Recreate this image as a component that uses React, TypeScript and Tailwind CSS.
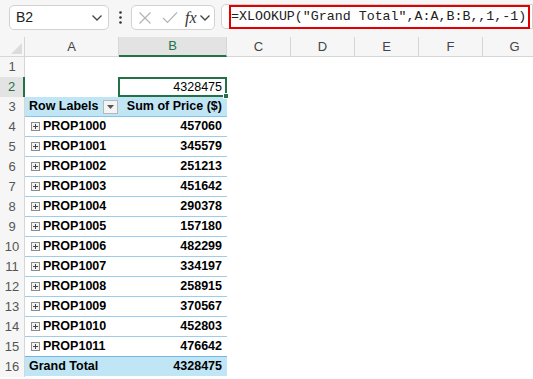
import React from "react";

const rows: [string, string][] = [
    ["PROP1000", "457060"],
    ["PROP1001", "345579"],
    ["PROP1002", "251213"],
    ["PROP1003", "451642"],
    ["PROP1004", "290378"],
    ["PROP1005", "157180"],
    ["PROP1006", "482299"],
    ["PROP1007", "334197"],
    ["PROP1008", "258915"],
    ["PROP1009", "370567"],
    ["PROP1010", "452803"],
    ["PROP1011", "476642"],
];

const cols = ["C", "D", "E", "F", "G"];

function Chevron() {
    return (
        <svg width="12" height="8" viewBox="0 0 12 8" fill="none" stroke="#444" strokeWidth="1.3">
            <path d="M1.5 1.5 L6 6 L10.5 1.5"/>
        </svg>
    );
}

function RowNum(props: { n: number, active?: boolean }) {
    return (
        <div
            className={"h-5 flex items-center justify-center text-[13px] " +
                (props.active ? "text-[#217346] bg-[#e3e3e3] border-r-2 border-[#217346]" : "text-[#555] bg-[#f6f6f6] border-r border-[#d6d6d6]")}>
            {props.n}
        </div>
    );
}

function EmptyCells() {
    return <>{cols.map(c => <div key={c} className="h-5"/>)}</>;
}

function Plus() {
    return (
        <span className="w-[9px] h-[9px] border border-[#8a8a8a] bg-[#f2f2f2] flex items-center justify-center mr-[3px] shrink-0">
            <svg width="7" height="7" viewBox="0 0 7 7" stroke="#444" strokeWidth="1">
                <path d="M3.5 1 V6 M1 3.5 H6"/>
            </svg>
        </span>
    );
}

export default function App() {
    return (
        <div className="w-[533px] h-[379px] overflow-hidden bg-white font-['Liberation_Sans',sans-serif] text-black">
            {/* formula bar */}
            <div className="h-[37px] bg-[#f6f6f6] flex items-start pt-[5px]">
                <div className="ml-[9px] w-[100px] h-[25px] bg-white border border-[#d2d2d2] rounded-[5px] flex items-center justify-between pl-[6px] pr-[5px]">
                    <span className="text-[14px] text-[#222]">B2</span>
                    <Chevron/>
                </div>
                <div className="w-[22px] h-[25px] flex items-center justify-center">
                    <svg width="3" height="13" viewBox="0 0 3 13" fill="#333">
                        <circle cx="1.5" cy="1.5" r="1.3"/>
                        <circle cx="1.5" cy="6.5" r="1.3"/>
                        <circle cx="1.5" cy="11.5" r="1.3"/>
                    </svg>
                </div>
                <div className="w-[84px] h-[25px] bg-white border border-[#d2d2d2] rounded-[5px] flex items-center pl-[6px]">
                    <svg width="14" height="14" viewBox="0 0 14 14" stroke="#b4b4b4" strokeWidth="1.2">
                        <path d="M1.5 1.5 L12.5 12.5 M12.5 1.5 L1.5 12.5"/>
                    </svg>
                    <svg className="ml-[10px]" width="16" height="13" viewBox="0 0 16 13" fill="none" stroke="#b4b4b4" strokeWidth="1.2">
                        <path d="M1 7 L5.5 11.5 L15 1.5"/>
                    </svg>
                    <span className="ml-[7px] font-['Liberation_Serif',serif] italic text-[16px] text-[#333] leading-none">fx</span>
                    <span className="ml-[2px]"><Chevron/></span>
                </div>
                <div className="ml-[6px] flex-1 h-[25px] bg-white border border-[#d2d2d2] rounded-l-[5px] flex items-start pl-[7px] -mt-px">
                    <div className="w-[301px] shrink-0 h-[24px] border-2 border-[#e00000] flex items-center">
                        <span className="font-['Liberation_Mono',monospace] text-[13.3px] text-[#222] whitespace-nowrap">=XLOOKUP("Grand Total",A:A,B:B,,1,-1)</span>
                    </div>
                </div>
            </div>

            {/* sheet */}
            <div className="grid grid-cols-[25px_94px_108px_64px_64px_64px_64px_64px]">
                {/* column headers */}
                <div className="h-5 bg-[#f6f6f6] border-r border-b border-[#d6d6d6] flex items-end justify-end pr-[2px] pb-[2px]">
                    <svg width="11" height="11" viewBox="0 0 11 11"><path d="M11 0 V11 H0 Z" fill="#dcdcdc"/></svg>
                </div>
                <div className="h-5 bg-[#f6f6f6] border-r border-b border-[#d6d6d6] flex items-center justify-center text-[13px] text-[#444]">A</div>
                <div className="h-5 bg-[#e3e3e3] border-r border-b-2 border-r-[#d6d6d6] border-b-[#217346] flex items-center justify-center text-[13px] text-[#217346]">B</div>
                {cols.map(c =>
                    <div key={c} className="h-5 bg-[#f6f6f6] border-r border-b border-[#d6d6d6] flex items-center justify-center text-[13px] text-[#444]">{c}</div>)}

                {/* row 1 */}
                <RowNum n={1}/>
                <div className="h-5"/>
                <div className="h-5"/>
                <EmptyCells/>

                {/* row 2 */}
                <RowNum n={2} active/>
                <div className="h-5"/>
                <div className="h-5 relative border-2 border-[#217346] -ml-px flex items-center justify-end pr-[3px] text-[12.5px]">
                    4328475
                    <span className="absolute -right-[4px] -bottom-[4px] w-[6px] h-[6px] bg-[#217346] border border-white"/>
                </div>
                <EmptyCells/>

                {/* row 3 header */}
                <RowNum n={3}/>
                <div className="h-5 bg-[#c0e6f5] border-b border-[#83c4e8] flex items-center pl-[4px] font-bold text-[12.5px] whitespace-nowrap">
                    <span className="flex-1">Row Labels</span>
                    <span className="w-[15px] h-[14px] bg-[#f4f4f4] border border-[#b8b8b8] flex items-center justify-center mr-px">
                        <svg width="7" height="4" viewBox="0 0 7 4"><path d="M0 0 H7 L3.5 4 Z" fill="#555"/></svg>
                    </span>
                </div>
                <div className="h-5 bg-[#c0e6f5] border-b border-[#83c4e8] flex items-center justify-end pr-[5px] font-bold text-[12.5px] whitespace-nowrap">Sum of Price ($)</div>
                <EmptyCells/>

                {rows.map(([label, value], i) =>
                    <React.Fragment key={label}>
                        <RowNum n={i + 4}/>
                        <div className="h-5 border-b border-[#9dcdeb] flex items-center pl-[6px] font-bold text-[12.5px]">
                            <Plus/>{label}
                        </div>
                        <div className="h-5 border-b border-[#9dcdeb] flex items-center justify-end pr-[5px] font-bold text-[12.5px]">{value}</div>
                        <EmptyCells/>
                    </React.Fragment>)}

                {/* grand total */}
                <RowNum n={16}/>
                <div className="h-5 bg-[#c0e6f5] border-t border-[#6db8e4] -mt-px flex items-center pl-[4px] font-bold text-[12.5px]">Grand Total</div>
                <div className="h-5 bg-[#c0e6f5] border-t border-[#6db8e4] -mt-px flex items-center justify-end pr-[5px] font-bold text-[12.5px]">4328475</div>
                <EmptyCells/>
            </div>
        </div>
    );
}
